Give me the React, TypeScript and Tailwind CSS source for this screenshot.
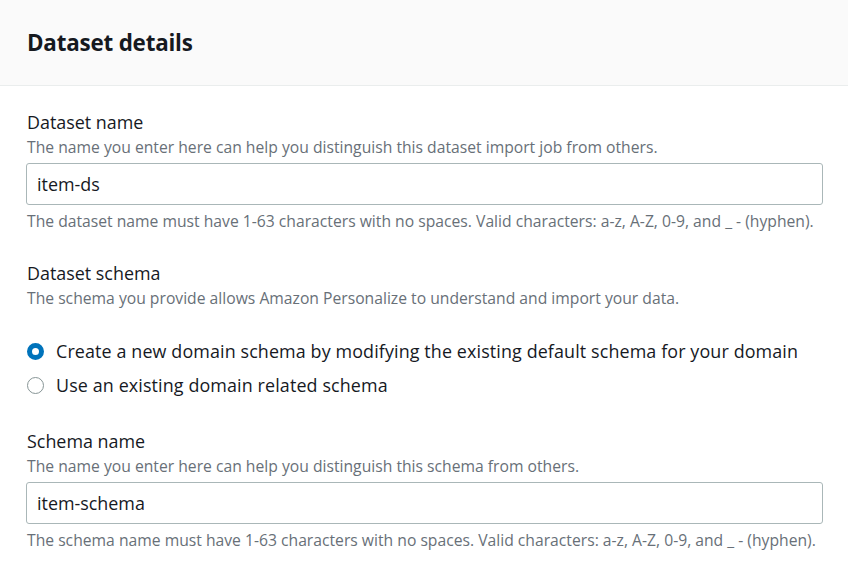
export default function App() {
  return (
    <div className="w-[848px] h-[578px] bg-white text-[#16191f] font-['Open_Sans',sans-serif] overflow-hidden">
      <div className="h-[86px] bg-[#fafafa] border-b border-[#eaeded] px-[27px] flex items-center">
        <h2 className="text-[22.4px] font-bold leading-[26px] tracking-[-0.2px]">Dataset details</h2>
      </div>

      <div className="px-[26px] pt-[25px]">
        <Field
          label="Dataset name"
          desc="The name you enter here can help you distinguish this dataset import job from others."
          value="item-ds"
          hint="The dataset name must have 1-63 characters with no spaces. Valid characters: a-z, A-Z, 0-9, and _ - (hyphen)."
        />

        <div className="mt-[31px]">
          <div className="text-[17.9px] leading-[22px] px-[1px]">Dataset schema</div>
          <div className="text-[15.7px] leading-[20px] text-[#687078] mt-[4px] px-[1px]">
            The schema you provide allows Amazon Personalize to understand and import your data.
          </div>
          <div className="mt-[32px] flex flex-col gap-[12px]">
            <Radio checked label="Create a new domain schema by modifying the existing default schema for your domain" />
            <Radio label="Use an existing domain related schema" />
          </div>
        </div>

        <div className="mt-[34px]">
          <Field
            label="Schema name"
            desc="The name you enter here can help you distinguish this schema from others."
            value="item-schema"
            hint="The schema name must have 1-63 characters with no spaces. Valid characters: a-z, A-Z, 0-9, and _ - (hyphen)."
          />
        </div>
      </div>
    </div>
  );
}

function Field({ label, desc, value, hint }: { label: string; desc: string; value: string; hint: string }) {
  return (
    <div>
      <div className="text-[17.9px] leading-[22px] px-[1px]">{label}</div>
      <div className="text-[15.7px] leading-[20px] text-[#687078] mt-[4px] px-[1px]">{desc}</div>
      <div className="mt-[6px] w-[797px] h-[42px] border border-[#aab7b8] rounded-[3px] flex items-center px-[10px] text-[17.9px]">
        {value}
      </div>
      <div className="text-[15.7px] leading-[20px] text-[#687078] mt-[6px] px-[1px] whitespace-nowrap">{hint}</div>
    </div>
  );
}

function Radio({ label, checked }: { label: string; checked?: boolean }) {
  return (
    <div className="flex items-center gap-[12px] pl-[1px] h-[22px]">
      {checked ? (
        <span className="w-[17px] h-[17px] rounded-full border-[5px] border-[#0073bb] bg-white" />
      ) : (
        <span className="w-[17px] h-[17px] rounded-full border-[1.5px] border-[#879596] bg-white" />
      )}
      <span className="text-[17.9px] leading-[22px] tracking-[0.12px] whitespace-nowrap">{label}</span>
    </div>
  );
}
